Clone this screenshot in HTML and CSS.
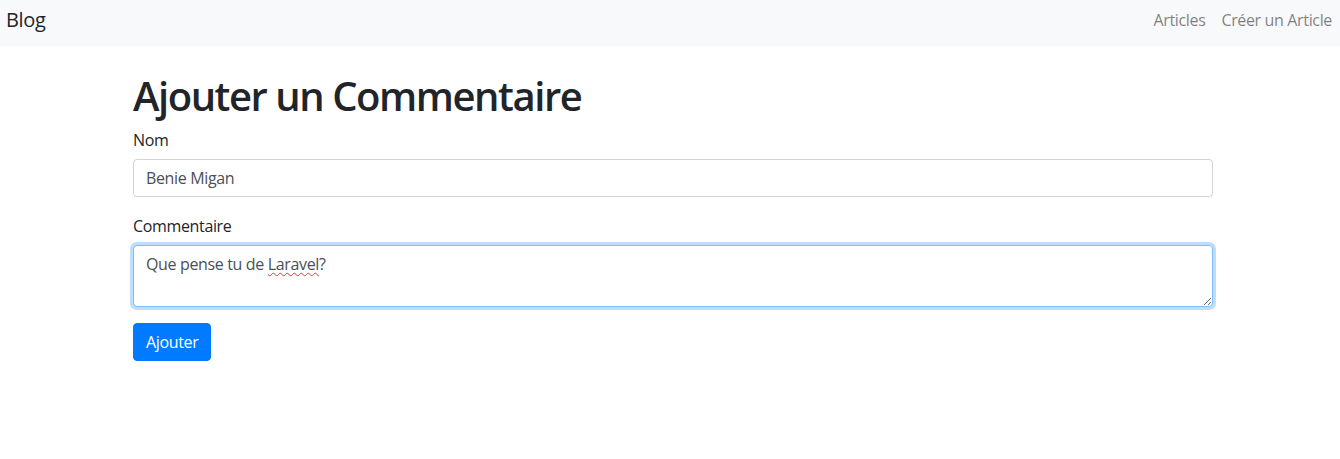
FILE: index.html
```html
<!DOCTYPE html>
<html lang="fr">
<head>
<meta charset="utf-8">
<title>Blog</title>
<link rel="stylesheet" href="styles.css">
</head>
<body>
<nav class="navbar">
  <a class="brand" href="#">Blog</a>
  <ul class="nav-links">
    <li><a href="#">Articles</a></li>
    <li><a href="#">Créer un Article</a></li>
  </ul>
</nav>
<main class="container">
  <h1 class="title">Ajouter un Commentaire</h1>
  <form class="form">
    <div class="form-group">
      <label class="label" for="nom">Nom</label>
      <input class="control" id="nom" type="text" value="Benie Migan">
    </div>
    <div class="form-group">
      <label class="label" for="commentaire">Commentaire</label>
      <div class="control textarea focused" id="commentaire" role="textbox" aria-multiline="true">Que pense tu de <span class="misspelled">Laravel</span>?</div>
    </div>
    <button class="btn" type="button">Ajouter</button>
  </form>
</main>
</body>
</html>
```
FILE: styles.css
```css
* { box-sizing: border-box; }
html, body { margin: 0; padding: 0; }
body {
  font-family: "Open Sans", "Noto Sans", "Liberation Sans", sans-serif;
  font-size: 16px;
  line-height: 1.5;
  letter-spacing: -0.35px;
  color: #212529;
  background: #fff;
}
.navbar {
  display: flex;
  align-items: center;
  justify-content: space-between;
  height: 46px;
  padding: 0 8px 7px 6px;
  background: #f8f9fa;
}
.brand {
  font-size: 20px;
  color: #212529;
  text-decoration: none;
}
.nav-links {
  display: flex;
  list-style: none;
  margin: 0;
  padding: 0;
  gap: 16px;
}
.nav-links a {
  color: rgba(0,0,0,.5);
  text-decoration: none;
}
.container {
  margin: 0 127px 0 133px;
  padding-top: 26px;
}
.title {
  font-size: 40px;
  font-weight: 600;
  letter-spacing: -1.45px;
  line-height: 1.2;
  margin: 0 0 8px;
}
.form-group { margin-bottom: 17px; }
.form-group:last-of-type { margin-bottom: 16px; }
.label {
  display: inline-block;
  margin-bottom: 7px;
}
.control {
  display: block;
  width: 100%;
  height: 38px;
  padding: 6px 12px;
  font: inherit;
  letter-spacing: inherit;
  color: #495057;
  background: #fff;
  border: 1px solid #ced4da;
  border-radius: 4px;
}
.textarea {
  height: 62px;
  resize: vertical;
  overflow: auto;
}
.focused {
  border-color: #80bdff;
  box-shadow: 0 0 0 3px rgba(0,123,255,.25);
}
.misspelled {
  text-decoration: underline wavy #e0393e;
  text-decoration-thickness: 1px;
  text-underline-offset: 2px;
}
.btn {
  display: inline-block;
  height: 38px;
  padding: 6px 12px;
  font: inherit;
  letter-spacing: inherit;
  color: #fff;
  background: #007bff;
  border: 1px solid #007bff;
  border-radius: 4px;
}
```
